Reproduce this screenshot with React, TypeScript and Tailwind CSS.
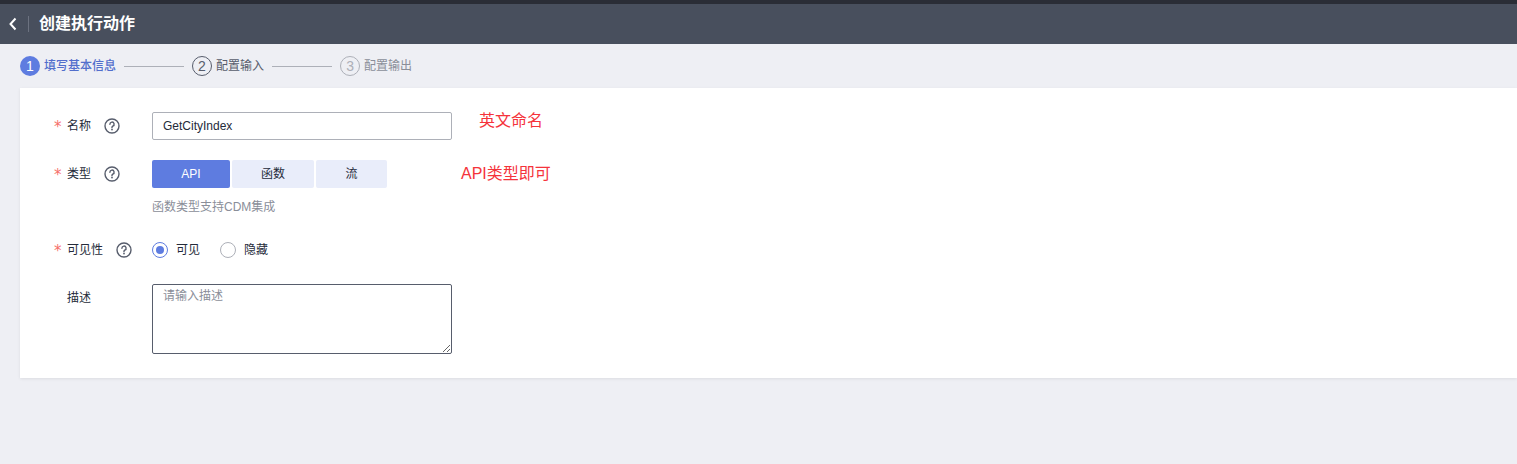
import { useState } from "react";

const font = "font-['Liberation_Sans','Noto_Sans_CJK_SC',sans-serif]";

function HelpIcon() {
    return (
        <svg width="16" height="16" viewBox="0 0 16 16" className="shrink-0 ml-[13px]">
            <circle cx="8" cy="8" r="7" fill="none" stroke="#575d6c" strokeWidth="1.4" />
            <path d="M5.9 6.2a2.1 2.1 0 1 1 2.9 1.9c-.5.3-.8.6-.8 1.2v.5" fill="none" stroke="#575d6c" strokeWidth="1.4" strokeLinecap="round" />
            <circle cx="8" cy="11.6" r="0.9" fill="#575d6c" />
        </svg>
    );
}

function FieldLabel({ text, required, help }: { text: string; required?: boolean; help?: boolean }) {
    return (
        <div className="flex items-center h-7 w-[132px] shrink-0 pl-[34px]">
            <span className="w-[13px] h-7 text-[#f66f6a] text-[15px] leading-none pt-[8px] font-['DejaVu_Sans',sans-serif]">{required ? "*" : ""}</span>
            <span className="text-[12px] text-[#252b3a]">{text}</span>
            {help && <HelpIcon />}
        </div>
    );
}

export default function App() {
    const [kind, setKind] = useState<string>("API");
    const [visible, setVisible] = useState<boolean>(true);

    const steps = [
        { n: 1, label: "填写基本信息", state: "active" },
        { n: 2, label: "配置输入", state: "next" },
        { n: 3, label: "配置输出", state: "todo" }
    ];

    return (
        <div className={`${font} min-h-[464px] bg-[#eeeff4]`}>
            <div className="h-1 bg-[#2a2d36]" />
            <div className="h-10 bg-[#484f5d] flex items-center">
                <svg width="10" height="14" viewBox="0 0 10 14" className="ml-[8px]">
                    <path d="M7.5 1.5 2.5 7l5 5.5" fill="none" stroke="#ffffff" strokeWidth="2" />
                </svg>
                <div className="ml-[10px] w-px h-4 bg-[#6c7280]" />
                <h1 className="ml-[10px] text-white text-[16px] font-bold">创建执行动作</h1>
            </div>

            <div className="h-11 flex items-center pl-5">
                {steps.map((s, i) => (
                    <div key={s.n} className="flex items-center">
                        {s.state === "active" ? (
                            <span className="w-5 h-5 rounded-full bg-[#5e7ce0] text-white text-[14px] flex items-center justify-center">{s.n}</span>
                        ) : (
                            <span className={`w-5 h-5 rounded-full border text-[14px] flex items-center justify-center ${s.state === "next" ? "border-[#575d6c] text-[#575d6c]" : "border-[#adb0b8] text-[#adb0b8]"}`}>{s.n}</span>
                        )}
                        <span className={`ml-[4px] text-[12px] ${s.state === "active" ? "text-[#526ecc] font-medium" : s.state === "next" ? "text-[#575d6c]" : "text-[#8a8e99]"}`}>{s.label}</span>
                        {i < steps.length - 1 && <div className="mx-2 w-[60px] h-px bg-[#adb0b8]" />}
                    </div>
                ))}
            </div>

            <div className="ml-5 bg-white pt-6 pb-6 shadow-[0_1px_3px_rgba(0,0,0,0.08)]">
                <div className="flex items-center">
                    <FieldLabel text="名称" required help />
                    <input
                        defaultValue="GetCityIndex"
                        className="w-[300px] h-7 border border-[#adb0b8] rounded-[2px] px-[10px] text-[12px] text-[#252b3a] outline-none"
                    />
                    <span className="ml-[27px] -mt-[10px] text-[16px] text-[#f5333b]">英文命名</span>
                </div>

                <div className="flex items-center mt-5">
                    <FieldLabel text="类型" required help />
                    <div className="flex gap-[2px]">
                        {[
                            { k: "API", w: "w-[78px]" },
                            { k: "函数", w: "w-[82px]" },
                            { k: "流", w: "w-[71px]" }
                        ].map((b) => (
                            <button
                                key={b.k}
                                onClick={() => setKind(b.k)}
                                className={`${b.w} h-7 rounded-[2px] text-[12px] ${kind === b.k ? "bg-[#5e7ce0] text-white" : "bg-[#e9edfa] text-[#252b3a]"}`}
                            >
                                {b.k}
                            </button>
                        ))}
                    </div>
                    <span className="ml-[74px] text-[16px] text-[#f5333b]">API类型即可</span>
                </div>
                <div className="ml-[132px] mt-[9px] text-[12px] leading-5 text-[#8a8e99]">函数类型支持CDM集成</div>

                <div className="flex items-center mt-[19px]">
                    <FieldLabel text="可见性" required help />
                    <label className="flex items-center cursor-pointer" onClick={() => setVisible(true)}>
                        <span className={`w-4 h-4 rounded-full border flex items-center justify-center ${visible ? "border-[#5e7ce0]" : "border-[#adb0b8]"}`}>
                            {visible && <span className="w-2 h-2 rounded-full bg-[#5e7ce0]" />}
                        </span>
                        <span className="ml-[8px] text-[12px] text-[#252b3a]">可见</span>
                    </label>
                    <label className="flex items-center ml-[20px] cursor-pointer" onClick={() => setVisible(false)}>
                        <span className={`w-4 h-4 rounded-full border flex items-center justify-center ${!visible ? "border-[#5e7ce0]" : "border-[#adb0b8]"}`}>
                            {!visible && <span className="w-2 h-2 rounded-full bg-[#5e7ce0]" />}
                        </span>
                        <span className="ml-[8px] text-[12px] text-[#252b3a]">隐藏</span>
                    </label>
                </div>

                <div className="flex items-start mt-5">
                    <FieldLabel text="描述" />
                    <textarea
                        placeholder="请输入描述"
                        className="w-[300px] h-[70px] border border-[#575d6c] rounded-[2px] px-[10px] py-[2px] text-[12px] text-[#252b3a] placeholder:text-[#8a8e99] outline-none"
                    />
                </div>
            </div>
        </div>
    );
}
